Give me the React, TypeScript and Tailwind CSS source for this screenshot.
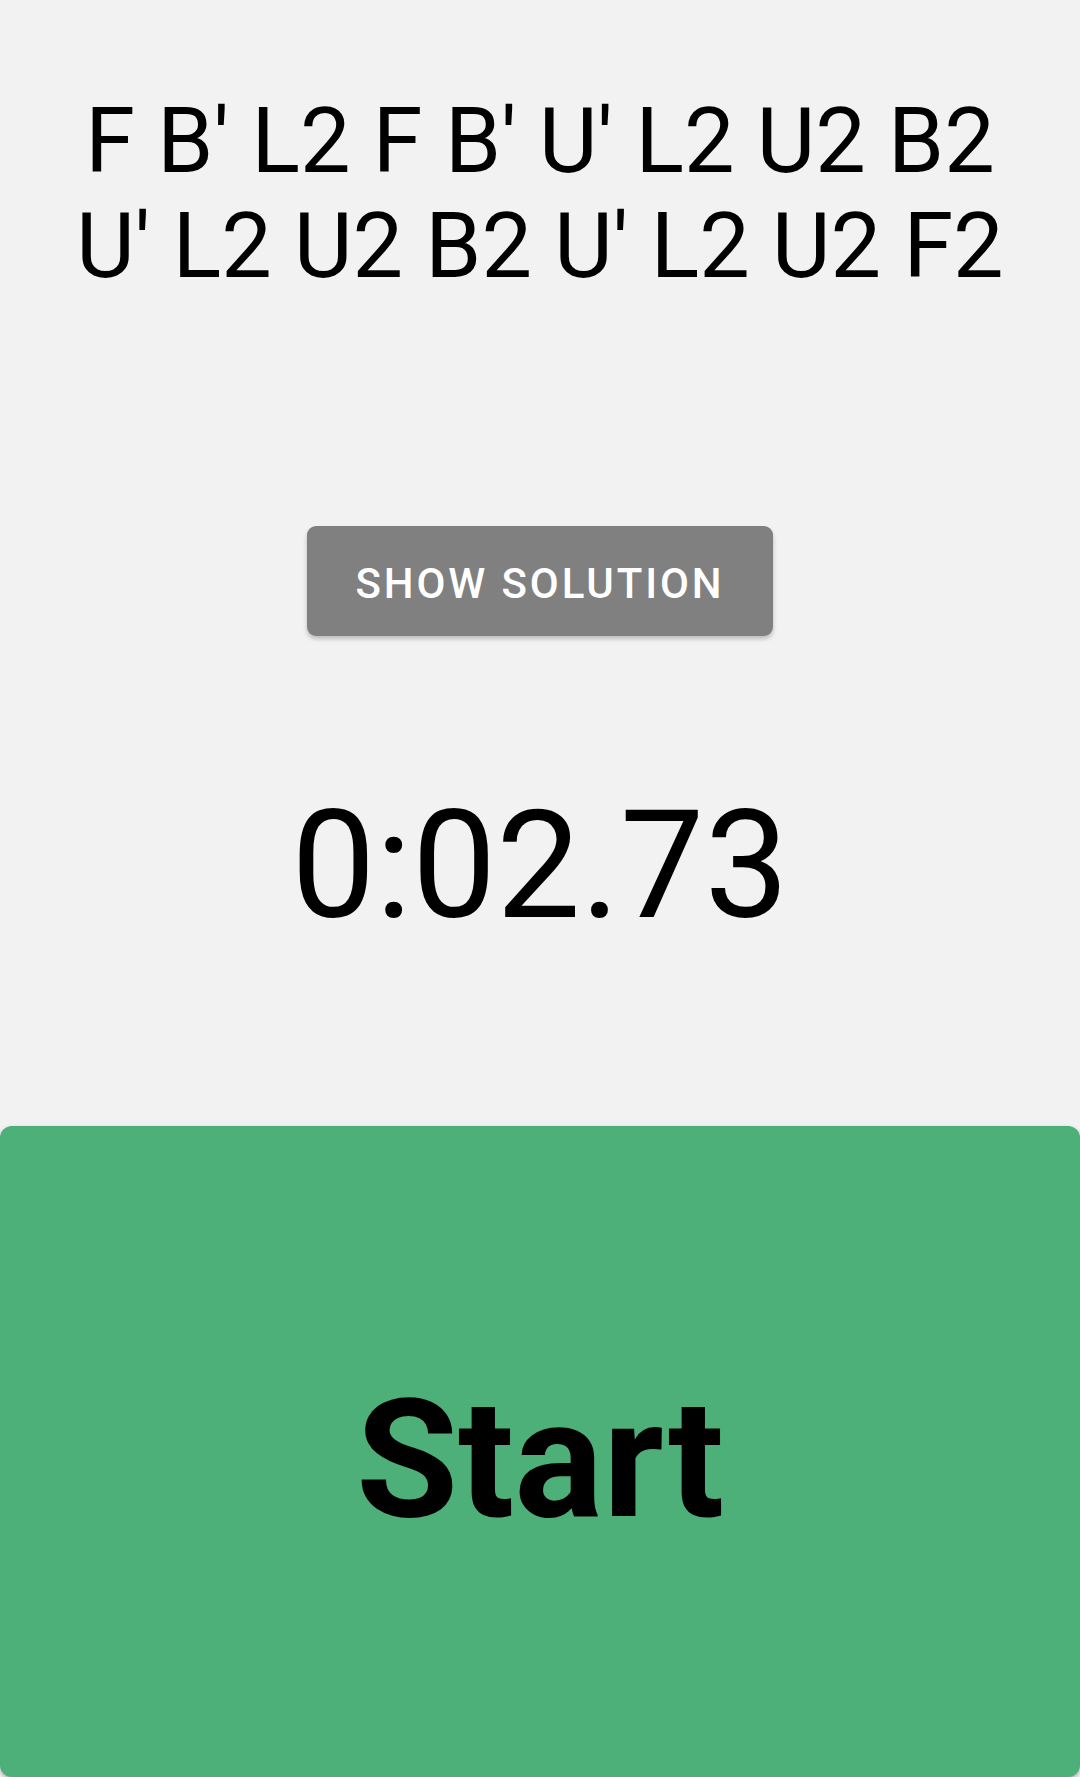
const scramble = ["F B' L2 F B' U' L2 U2 B2", "U' L2 U2 B2 U' L2 U2 F2"];

export default function App() {
    return (
        <div className="h-[1777px] w-full bg-[#f2f2f2] flex flex-col items-center font-['Roboto',sans-serif] text-black overflow-hidden">
            {/* Scramble */}
            <div className="pt-[89px] text-center text-[90px] leading-[105px] whitespace-nowrap">
                {scramble.map((line) => (
                    <div key={line}>{line}</div>
                ))}
            </div>

            <button className="mt-[227px] w-[466px] h-[110px] pt-[4px] rounded-[9px] bg-[#808080] text-white text-[42px] font-medium tracking-[2.9px] uppercase shadow-[0_3px_4px_rgba(0,0,0,0.22)]">
                Show Solution
            </button>

            {/* Timer */}
            <div className="mt-[140px] text-[150px] leading-[180px] tabular-nums">
                0:02.73
            </div>

            <button className="mt-[170px] w-full flex-1 rounded-[12px] bg-[#4cb078] flex items-center justify-center shadow-[0_2px_4px_rgba(0,0,0,0.3)]">
                <span className="text-[166px] font-bold leading-none pt-[16px]">Start</span>
            </button>
        </div>
    );
}
